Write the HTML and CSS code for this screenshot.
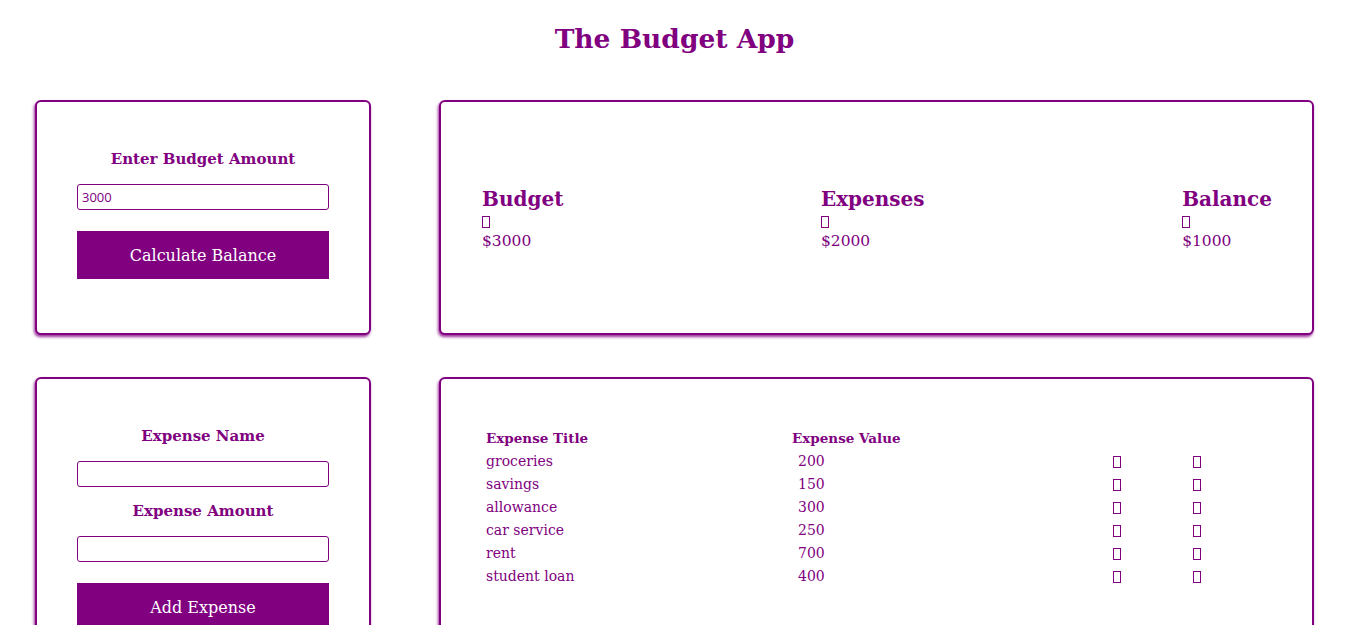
FILE: index.html
```html
<!DOCTYPE html>
<html lang="en">
<head>
<meta charset="utf-8">
<title>The Budget App</title>
<link rel="stylesheet" href="styles.css">
</head>
<body>
<h1 class="title">The Budget App</h1>
<main class="board">
  <section class="card form-card">
    <form class="form">
      <label class="field-label" for="budget">Enter Budget Amount</label>
      <input class="field gap-btn" id="budget" type="text" value="3000">
      <button class="btn" type="button">Calculate Balance</button>
    </form>
  </section>

  <section class="card summary">
    <div class="stat">
      <h2 class="stat-title">Budget</h2>
      <span class="icon-line"><span class="tofu"></span></span>
      <span class="stat-value">$3000</span>
    </div>
    <div class="stat">
      <h2 class="stat-title">Expenses</h2>
      <span class="icon-line"><span class="tofu"></span></span>
      <span class="stat-value">$2000</span>
    </div>
    <div class="stat">
      <h2 class="stat-title">Balance</h2>
      <span class="icon-line"><span class="tofu"></span></span>
      <span class="stat-value">$1000</span>
    </div>
  </section>

  <section class="card form-card">
    <form class="form">
      <label class="field-label" for="ename">Expense Name</label>
      <input class="field gap-label" id="ename" type="text">
      <label class="field-label" for="eamount">Expense Amount</label>
      <input class="field gap-btn" id="eamount" type="text">
      <button class="btn" type="button">Add Expense</button>
    </form>
  </section>

  <section class="card list">
    <div class="expense-table">
      <div class="th">Expense Title</div>
      <div class="th">Expense Value</div>
      <div></div>
      <div></div>

      <div class="td">groceries</div><div class="td val">200</div><div class="td"><span class="tofu"></span></div><div class="td"><span class="tofu"></span></div>
      <div class="td">savings</div><div class="td val">150</div><div class="td"><span class="tofu"></span></div><div class="td"><span class="tofu"></span></div>
      <div class="td">allowance</div><div class="td val">300</div><div class="td"><span class="tofu"></span></div><div class="td"><span class="tofu"></span></div>
      <div class="td">car service</div><div class="td val">250</div><div class="td"><span class="tofu"></span></div><div class="td"><span class="tofu"></span></div>
      <div class="td">rent</div><div class="td val">700</div><div class="td"><span class="tofu"></span></div><div class="td"><span class="tofu"></span></div>
      <div class="td">student loan</div><div class="td val">400</div><div class="td"><span class="tofu"></span></div><div class="td"><span class="tofu"></span></div>
    </div>
  </section>
</main>
</body>
</html>
```

FILE: styles.css
```css
* { box-sizing: border-box; }

body {
  margin: 0;
  background: #fff;
  color: #800080;
  font-family: "DejaVu Serif", "Liberation Serif", serif;
}

.title {
  margin: 0;
  padding-top: 19px;
  height: 100px;
  text-align: center;
  font-size: 26.5px;
  line-height: 40px;
  font-weight: bold;
  color: #800080;
}

.board {
  display: grid;
  grid-template-columns: 336px 875px;
  column-gap: 68px;
  row-gap: 42px;
  padding: 0 35px;
}

.card {
  border: 2px solid #800080;
  border-radius: 6px;
  background: #fff;
  box-shadow: -1px 2px 3px rgba(128, 0, 128, 0.8);
}

.form-card {
  padding: 47px 40px 54px;
}

.form {
  display: flex;
  flex-direction: column;
}

.field-label {
  display: block;
  text-align: center;
  font-size: 15px;
  line-height: 20px;
  font-weight: bold;
  margin-bottom: 15px;
}

.field {
  display: block;
  width: 100%;
  height: 26px;
  border: 1px solid #800080;
  border-radius: 3px;
  padding: 0 4px;
  font-family: "Open Sans", sans-serif;
  font-size: 13px;
  color: #800080;
  background: #fff;
  outline: none;
}

.gap-label { margin-bottom: 14px; }
.gap-btn { margin-bottom: 21px; }

.btn {
  display: block;
  width: 100%;
  height: 48px;
  border: none;
  background: #800080;
  color: #fff;
  font-family: "DejaVu Serif", "Liberation Serif", serif;
  font-size: 16px;
  cursor: pointer;
}

.summary {
  display: flex;
  justify-content: space-between;
  align-items: center;
  padding: 0 40px 0 41px;
}

.stat {
  display: flex;
  flex-direction: column;
}

.stat-title {
  margin: 0;
  font-size: 20px;
  line-height: 28px;
  font-weight: bold;
}

.icon-line {
  display: block;
  height: 18px;
  line-height: 18px;
}

.stat-value {
  display: block;
  font-size: 15.5px;
  line-height: 20px;
}

.tofu {
  display: inline-block;
  width: 8px;
  height: 12px;
  border: 1px solid #800080;
  vertical-align: middle;
}

.list {
  padding: 48px 40px 40px 45px;
}

.expense-table {
  display: grid;
  grid-template-columns: 306px 321px 80px 1fr;
  grid-auto-rows: 23px;
  align-items: center;
}

.th {
  font-size: 13.5px;
  font-weight: bold;
  line-height: 23px;
}

.td {
  font-size: 14px;
  line-height: 23px;
}

.td.val { padding-left: 6px; }
```
